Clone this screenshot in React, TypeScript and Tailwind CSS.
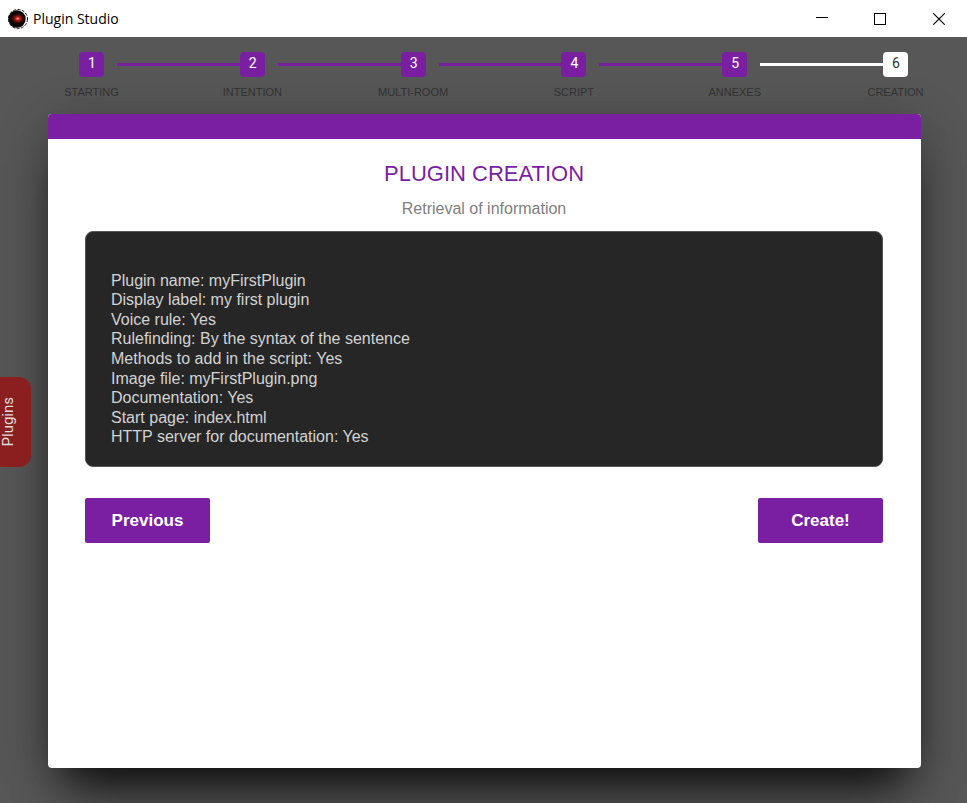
import React from "react";

const steps = ["Starting", "Intention", "Multi-room", "Script", "Annexes", "Creation"];
const current = 5;

const summary: [string, string][] = [
  ["Plugin name", "myFirstPlugin"],
  ["Display label", "my first plugin"],
  ["Voice rule", "Yes"],
  ["Rulefinding", "By the syntax of the sentence"],
  ["Methods to add in the script", "Yes"],
  ["Image file", "myFirstPlugin.png"],
  ["Documentation", "Yes"],
  ["Start page", "index.html"],
  ["HTTP server for documentation", "Yes"],
];

function Logo() {
  return (
    <svg width="20" height="20" viewBox="0 0 20 20" aria-hidden="true">
      <defs>
        <radialGradient id="eye">
          <stop offset="0" stopColor="#ffc8b0" />
          <stop offset="0.16" stopColor="#f06048" />
          <stop offset="0.36" stopColor="#b81810" />
          <stop offset="0.7" stopColor="#4c0c0a" />
          <stop offset="1" stopColor="#140505" />
        </radialGradient>
      </defs>
      <circle cx="10" cy="10" r="9.5" fill="none" stroke="#111" strokeWidth="1" strokeDasharray="3 1.4" />
      <circle cx="9" cy="10" r="8.7" fill="#0c0505" />
      <ellipse cx="9.8" cy="9.6" rx="6.6" ry="5" fill="url(#eye)" />
    </svg>
  );
}

function TitleBar() {
  return (
    <header className="flex h-[37px] items-center bg-white pl-2 text-black">
      <Logo />
      <span className="ml-[5px] flex-1 font-['Open_Sans',sans-serif] text-sm">Plugin Studio</span>
      <button type="button" aria-label="Minimize" className="flex h-full w-[58px] items-center justify-center">
        <svg width="12" height="12" viewBox="0 0 12 12" stroke="#000" shapeRendering="crispEdges">
          <path d="M0 4.5h12" />
        </svg>
      </button>
      <button type="button" aria-label="Maximize" className="flex h-full w-[58px] items-center justify-center">
        <svg width="12" height="12" viewBox="0 0 12 12" fill="none" stroke="#000" shapeRendering="crispEdges">
          <path d="M.5 .5h11v11h-11z" />
        </svg>
      </button>
      <button type="button" aria-label="Close" className="flex h-full w-[58px] items-center justify-center">
        <svg width="14" height="12" viewBox="0 0 14 12" stroke="#000" strokeWidth="1.1">
          <path d="M2.3 .3l11.4 11.4M13.7 .3L2.3 11.7" />
        </svg>
      </button>
    </header>
  );
}

function Stepper() {
  return (
    <ol className="flex pt-[15px] pr-[59px] pl-[79px]">
      {steps.map((label, i) => (
        <React.Fragment key={label}>
          {i > 0 && (
            <li
              aria-hidden="true"
              className={`mt-[11px] ml-[13px] h-[3px] flex-1 ${i === current ? "bg-white" : "bg-[#7b1fa2]"}`}
            />
          )}
          <li className="flex w-[25px] flex-col items-center">
            <span
              className={`flex h-[25px] w-[25px] justify-center rounded-[4px] pl-px font-[Roboto,sans-serif] text-sm leading-[22px] ${
                i === current ? "bg-white text-[#333333]" : "bg-[#7b1fa2] text-white"
              }`}
            >
              {i + 1}
            </span>
            <span className="mt-2 text-[11px] leading-[14px] whitespace-nowrap text-[#333333] uppercase">{label}</span>
          </li>
        </React.Fragment>
      ))}
    </ol>
  );
}

export default function App() {
  return (
    <div className="relative flex min-h-screen flex-col overflow-hidden bg-[#575757] font-['Liberation_Sans',Arial,sans-serif]">
      <TitleBar />
      <Stepper />
      <main className="mt-[15px] mr-[46px] mb-[35px] ml-12 flex-1 overflow-hidden rounded-[4px] bg-white shadow-[0_34px_46px_-18px_rgba(0,0,0,0.85),0_10px_50px_-4px_rgba(0,0,0,0.3)]">
        <div className="h-[25px] bg-[#7b1fa2]" />
        <div className="pt-[22px] pr-[38px] pl-[37px]">
          <h1 className="text-center text-[22px] leading-[26px] text-[#7b1fa2]">PLUGIN CREATION</h1>
          <p className="mt-3 text-center text-base leading-5 text-[#808080]">Retrieval of information</p>
          <div className="mt-3 rounded-lg border border-[#555555] bg-[#262626] px-[25px] pt-[39px] pb-[19px]">
            <ul className="grid h-[176px] auto-rows-fr items-center text-base leading-5 text-[#d3d3d3]">
              {summary.map(([name, value]) => (
                <li key={name}>
                  {name}: {value}
                </li>
              ))}
            </ul>
          </div>
          <div className="mt-[31px] flex justify-between">
            <button type="button" className="h-[45px] w-[125px] rounded-[2px] bg-[#7b1fa2] text-[17px] font-bold text-white">
              Previous
            </button>
            <button type="button" className="h-[45px] w-[125px] rounded-[2px] bg-[#7b1fa2] text-[17px] font-bold text-white">
              Create!
            </button>
          </div>
        </div>
      </main>
      <button
        type="button"
        className="absolute top-[377px] left-0 flex h-[90px] w-[31px] items-center justify-center rounded-r-xl bg-[#8b1f1f] pr-[15px] text-[#dddddd]"
      >
        <span className="rotate-180 font-[Roboto,sans-serif] text-[15px] leading-[18px] [writing-mode:vertical-rl]">Plugins</span>
      </button>
    </div>
  );
}
